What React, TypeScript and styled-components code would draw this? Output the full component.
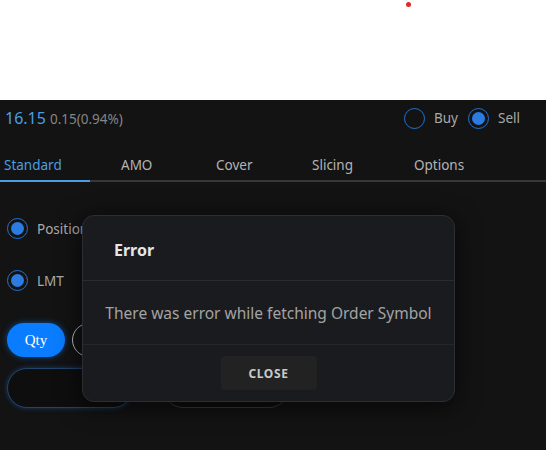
import * as React from "react";
import styled, { createGlobalStyle } from "styled-components";

const GlobalStyle = createGlobalStyle`
  html, body {
    margin: 0;
    padding: 0;
    background: #ffffff;
  }
  * {
    box-sizing: border-box;
  }
`;

const font = `"Noto Sans", "Open Sans", sans-serif`;

const SPage = styled.div`
  width: 546px;
  height: 450px;
  position: relative;
  overflow: hidden;
  font-family: ${font};
`;

const STopBar = styled.div`
  height: 100px;
  background: #ffffff;
  display: flex;
  justify-content: flex-start;
  padding: 2px 0 0 406px;
`;

const SDot = styled.span`
  width: 5px;
  height: 5px;
  border-radius: 50%;
  background: #e3262b;
`;

const SPanel = styled.div`
  height: 350px;
  background: #131313;
  display: flex;
  flex-direction: column;
`;

const SQuoteRow = styled.div`
  height: 36px;
  display: flex;
  align-items: center;
  justify-content: space-between;
  padding: 0 26px 0 5px;
`;

const SPrice = styled.div`
  display: flex;
  align-items: baseline;
  gap: 4px;
`;

const SLtp = styled.span`
  color: #4a9ee3;
  font-size: 16px;
`;

const SChange = styled.span`
  color: #858585;
  font-size: 13.5px;
`;

const SSideGroup = styled.div`
  display: flex;
  align-items: center;
`;

const SRadioLabel = styled.label<{ $gap?: number }>`
  display: flex;
  align-items: center;
  gap: 9px;
  margin-left: ${(p) => p.$gap || 0}px;
  color: #a9a9a9;
  font-size: 13.5px;
`;

const SRadio = styled.span<{ $on?: boolean }>`
  width: 21px;
  height: 21px;
  border-radius: 50%;
  border: 1.5px solid #2472cf;
  display: flex;
  align-items: center;
  justify-content: center;
  &::after {
    content: "";
    width: 13px;
    height: 13px;
    border-radius: 50%;
    background: ${(p) => (p.$on ? "#2b7be0" : "transparent")};
  }
`;

const STabs = styled.div`
  height: 46px;
  display: flex;
  align-items: stretch;
  border-bottom: 2px solid #373737;
`;

const STab = styled.div<{ $active?: boolean; $w: number; $pad: number }>`
  width: ${(p) => p.$w}px;
  padding-left: ${(p) => p.$pad}px;
  display: flex;
  align-items: center;
  padding-top: 12px;
  font-size: 13.5px;
  color: ${(p) => (p.$active ? "#4a9ee3" : "#b4b4b4")};
  box-shadow: ${(p) => (p.$active ? "inset 0 -2px 0 #4a9ee3" : "none")};
  margin-bottom: -2px;
`;

const SForm = styled.div`
  display: flex;
  flex-direction: column;
  padding: 36px 7px 0;
`;

const SOptionRow = styled.div<{ $h: number }>`
  height: ${(p) => p.$h}px;
  display: flex;
  align-items: flex-start;
`;

const SPillRow = styled.div`
  display: flex;
  gap: 7px;
  margin-top: 9px;
`;

const SPill = styled.button<{ $active?: boolean }>`
  height: 34px;
  min-width: 58px;
  border-radius: 17px;
  font-family: "Liberation Serif", serif;
  font-size: 15px;
  color: #ffffff;
  background: ${(p) => (p.$active ? "#0a7cff" : "transparent")};
  border: ${(p) => (p.$active ? "none" : "1px solid #bdbdbd")};
  box-shadow: ${(p) => (p.$active ? "0 0 6px rgba(10, 124, 255, 0.55)" : "none")};
  padding: 0 14px;
`;

const SInputRow = styled.div`
  display: flex;
  gap: 30px;
  margin-top: 11px;
`;

const SInput = styled.div<{ $focus?: boolean }>`
  width: 126px;
  height: 40px;
  border-radius: 20px;
  background: #0e0e0e;
  border: 1px solid ${(p) => (p.$focus ? "#22446b" : "#3a3a3a")};
  box-shadow: ${(p) => (p.$focus ? "0 0 5px rgba(36, 110, 200, 0.45)" : "none")};
`;

const SFooterInfo = styled.div`
  margin-top: auto;
  display: flex;
  justify-content: space-between;
  padding: 0 22px 0 5px;
  height: 1px;
  overflow: visible;
  color: #4a9ee3;
  font-size: 14px;
  line-height: 1;
`;

const SBackdrop = styled.div`
  position: absolute;
  inset: 0;
  pointer-events: none;
`;

const SModal = styled.div`
  position: absolute;
  left: 82px;
  top: 215px;
  width: 373px;
  height: 187px;
  background: #1a1b1f;
  border: 1px solid #2d2e33;
  border-radius: 12px;
  box-shadow: 0 4px 24px rgba(0, 0, 0, 0.7);
  display: flex;
  flex-direction: column;
`;

const SModalHeader = styled.div`
  height: 65px;
  display: flex;
  align-items: center;
  padding: 3px 0 0 31px;
  border-bottom: 1px solid #2b2c31;
  color: #e6e6e6;
  font-size: 16px;
  font-weight: 700;
`;

const SModalBody = styled.div`
  height: 64px;
  display: flex;
  align-items: center;
  justify-content: center;
  border-bottom: 1px solid #25262a;
  color: #a3a3a3;
  font-size: 15.5px;
`;

const SModalFooter = styled.div`
  flex: 1;
  display: flex;
  align-items: center;
  justify-content: center;
`;

const SCloseButton = styled.button`
  width: 96px;
  height: 34px;
  border: none;
  border-radius: 4px;
  background: #222223;
  color: #c9c9c9;
  font-family: ${font};
  font-size: 12px;
  font-weight: 700;
  letter-spacing: 0.6px;
`;

const TABS = [
  { label: "Standard", w: 90, pad: 4 },
  { label: "AMO", w: 100, pad: 31 },
  { label: "Cover", w: 99, pad: 26 },
  { label: "Slicing", w: 103, pad: 23 },
  { label: "Options", w: 154, pad: 22 },
];

const App = () => {
  return (
    <SPage>
      <GlobalStyle />
      <STopBar>
        <SDot />
      </STopBar>
      <SPanel>
        <SQuoteRow>
          <SPrice>
            <SLtp>16.15</SLtp>
            <SChange>0.15(0.94%)</SChange>
          </SPrice>
          <SSideGroup>
            <SRadioLabel>
              <SRadio />
              Buy
            </SRadioLabel>
            <SRadioLabel $gap={10}>
              <SRadio $on />
              Sell
            </SRadioLabel>
          </SSideGroup>
        </SQuoteRow>
        <STabs>
          {TABS.map((t, i) => (
            <STab key={t.label} $active={i === 0} $w={t.w} $pad={t.pad}>
              {t.label}
            </STab>
          ))}
        </STabs>
        <SForm>
          <SOptionRow $h={52}>
            <SRadioLabel>
              <SRadio $on />
              Position
            </SRadioLabel>
          </SOptionRow>
          <SOptionRow $h={44}>
            <SRadioLabel>
              <SRadio $on />
              LMT
            </SRadioLabel>
          </SOptionRow>
          <SPillRow>
            <SPill $active>Qty</SPill>
            <SPill>Amount</SPill>
          </SPillRow>
          <SInputRow>
            <SInput $focus />
            <SInput />
          </SInputRow>
        </SForm>
        <SFooterInfo>
          <span>Margin</span>
          <span>Req: ₹ 777</span>
        </SFooterInfo>
      </SPanel>
      <SBackdrop>
        <SModal>
          <SModalHeader>Error</SModalHeader>
          <SModalBody>There was error while fetching Order Symbol</SModalBody>
          <SModalFooter>
            <SCloseButton>CLOSE</SCloseButton>
          </SModalFooter>
        </SModal>
      </SBackdrop>
    </SPage>
  );
};

export default App;
